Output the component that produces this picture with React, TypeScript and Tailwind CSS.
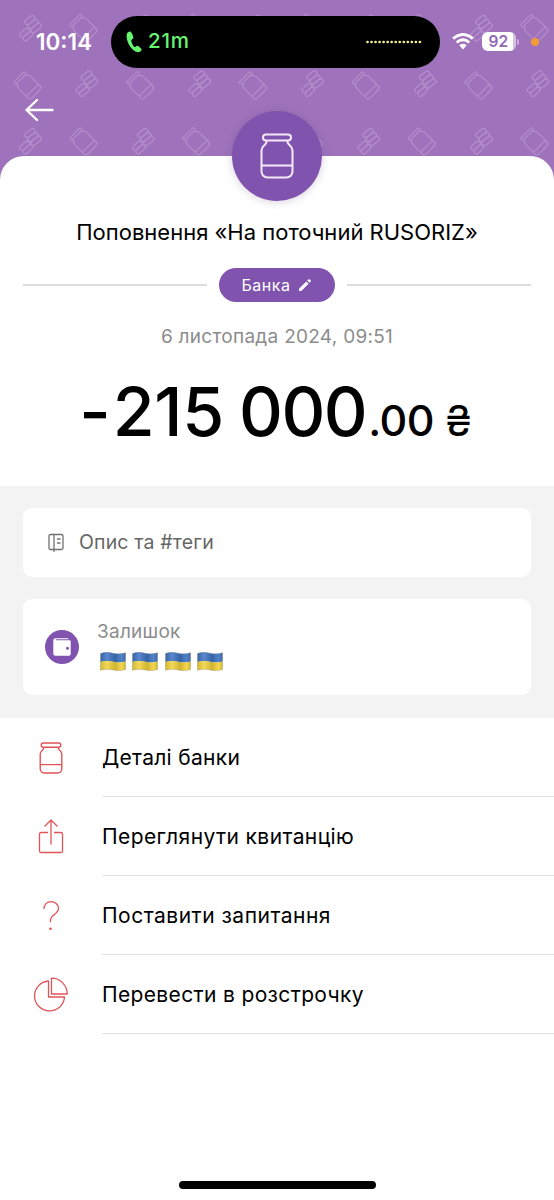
import React from "react";

const JAR = "M6 1.500h22a3 3 0 0 1 0 6H6a3 3 0 0 1 0-6ZM6.500 7.500c.9 5-5 4.500-5 10V38.500a6 6 0 0 0 6 6h19a6 6 0 0 0 6-6V17.500c0-5.500-5.900-5-5-10M1.500 32.500h31";

function Jar({ className, width }: { className: string; width: number }) {
  return (
    <svg viewBox="0 0 34 46" className={className} fill="none" stroke="currentColor" strokeWidth={width} strokeLinejoin="round">
      <path d={JAR} />
    </svg>
  );
}

const jars: [number, number][] = [];
const coins: [number, number][] = [];
for (let i = 0; i < 5; i++) {
  const x = i * 112.75;
  coins.push([30 + x, 28], [86.5 + x, 83.5], [30 + x, 141]);
  jars.push([84.5 + x, 29], [28.5 + x, 86.5], [84.5 + x, 142.5]);
}

function Pattern() {
  return (
    <svg className="absolute inset-0 h-[180px] w-full" viewBox="0 0 554 180" fill="none" stroke="#b48ecb" strokeWidth="1.200" strokeLinejoin="round">
      {jars.map(([x, y]) => (
        <g key={`j${x}-${y}`} transform={`translate(${x} ${y}) rotate(-45)`}>
          <path d="M-6.500 -13.500h13q1.500 0 1.500 1.500t-1.500 1.500h-13q-1.500 0-1.500-1.500t1.500-1.500ZM-6 -10.500c0 2-2.500 2-2.500 5V7.500q0 3 3 3h11q3 0 3-3V-5.500c0-3-2.500-3-2.500-5M-8.500 5.500h17" />
        </g>
      ))}
      {coins.map(([x, y]) => (
        <g key={`c${x}-${y}`} transform={`translate(${x} ${y})`}>
          <g transform="translate(3 -4) rotate(-38)">
            <rect x="-5.800" y="-7.500" width="11.600" height="5" rx="2.400" />
            <rect x="-5.800" y="-2.500" width="11.600" height="5" rx="2.400" />
            <rect x="-5.800" y="2.500" width="11.600" height="5" rx="2.400" />
          </g>
          <g transform="translate(-3.800 6.500) rotate(-42)">
            <rect x="-5.500" y="-4.800" width="11" height="4.800" rx="2.300" />
            <rect x="-5.500" y="0" width="11" height="4.800" rx="2.300" />
          </g>
        </g>
      ))}
    </svg>
  );
}

function Flag() {
  return (
    <svg viewBox="0 0 26 19" className="h-[19px] w-[26px]">
      <defs>
        <linearGradient id="shade" x1="0" x2="1">
          <stop offset="0" stopColor="#000" stopOpacity=".12" />
          <stop offset=".25" stopColor="#fff" stopOpacity=".15" />
          <stop offset=".6" stopColor="#000" stopOpacity=".14" />
          <stop offset=".85" stopColor="#fff" stopOpacity=".1" />
          <stop offset="1" stopColor="#000" stopOpacity=".15" />
        </linearGradient>
      </defs>
      <path d="M.500 1.500C5-.3 9 .3 13 1.200s8 1 12.500-.400V9.500C21 11 17 10.800 13 9.800S5 8.500.500 10Z" fill="#3d73c4" />
      <path d="M.500 10C5 8.500 9 8.900 13 9.800S21 11 25.500 9.500V17.500C21 19 17 18.800 13 17.900S5 17 .500 18.300Z" fill="#f0d23a" />
      <path d="M.500 1.500C5-.3 9 .3 13 1.200s8 1 12.500-.400V17.500C21 19 17 18.800 13 17.900S5 17 .500 18.300Z" fill="url(#shade)" stroke="#77764d" strokeOpacity=".45" strokeWidth=".6" />
    </svg>
  );
}

function Header() {
  return (
    <header className="relative h-[180px] bg-[#9e73bb]">
      <Pattern />
      <div className="relative flex h-[83px] items-center text-white">
        <span className="ml-[36px] w-[75px] pt-px text-[22.500px] leading-none font-semibold">10:14</span>
        <div className="flex h-[52px] w-[329px] items-center rounded-full bg-black pr-[18px] pl-[15px]">
          <svg viewBox="0 0 16 22" className="h-[22px] w-[16px]" fill="#67f56f">
            <path d="M4.500.7C3 .2.700 1.800.600 4.500c-.2 7 5 15 10.400 16.600 2.300.6 4.700-1 4.600-2.600 0-1-3.400-3.900-4.400-3.800-1.300.1-1.500 1.600-2.600 1.200C6.800 14.900 5 10.500 5.400 9c.3-1 1.800-.8 2-2C7.600 5.700 5.700 1.200 4.500.7Z" />
          </svg>
          <span className="ml-[6px] text-[20.500px] font-medium tracking-[.8px] text-[#67f56f]">21m</span>
          <svg viewBox="0 0 56 4" className="ml-auto h-[4px] w-[56px]">
            <path d="M1.500 2H55" stroke="#f7f28a" strokeWidth="2.700" strokeLinecap="round" strokeDasharray="0 4.030" />
          </svg>
        </div>
        <svg viewBox="0 0 22 17" className="ml-[12px] h-[17px] w-[22px]">
          <path d="M1.200 5.600Q11-2.700 20.800 5.600M4.700 9.500Q11 4.200 17.300 9.500" fill="none" stroke="white" strokeWidth="2.900" />
          <path d="M7.300 12.200Q11 9.400 14.700 12.200L11 16.500Z" fill="white" />
        </svg>
        <div className="ml-[8px] flex h-[19px] w-[34px] items-center justify-center rounded-[6px] bg-[linear-gradient(90deg,#fff_92%,#d5c1e1_92%)] pr-px text-[15.500px] leading-none font-semibold tracking-[.3px] text-[#9468b4]">92</div>
        <span className="ml-px h-[6px] w-[2px] rounded-r-full bg-[#c9afd9]" />
        <span className="ml-[12px] size-[8px] rounded-full bg-[#f39a38]" />
      </div>
      <button aria-label="Назад" className="absolute top-[98px] left-[24px] text-white">
        <svg viewBox="0 0 30 24" className="h-[24px] w-[30px]" fill="none" stroke="currentColor" strokeWidth="2.400" strokeLinecap="round" strokeLinejoin="round">
          <path d="M13 2 2.500 12 13 22M2.500 12h26" />
        </svg>
      </button>
    </header>
  );
}

const red = "#e05457";

const actions = [
  { label: "Деталі банки", spacing: "tracking-[.3px]", icon: <Jar width={2} className="h-[32px] w-[24px] text-[#e05457]" /> },
  {
    label: "Переглянути квитанцію",
    spacing: "tracking-[.4px]",
    icon: (
      <svg viewBox="0 0 26 36" className="h-[36px] w-[26px]" fill="none" stroke={red} strokeWidth="1.300" strokeLinejoin="round">
        <path d="M10 13.500H3q-1.500 0-1.500 1.500v17q0 1.500 1.500 1.500h20q1.500 0 1.500-1.500V15q0-1.500-1.500-1.500h-7M13 25.500V1M6.500 7.500 13 1l6.500 6.500" />
      </svg>
    ),
  },
  {
    label: "Поставити запитання",
    spacing: "tracking-[.5px]",
    icon: (
      <svg viewBox="0 0 18 30" className="h-[30px] w-[18px]" fill="none" stroke={red} strokeWidth="1.300" strokeLinecap="round">
        <path d="M2 7.500C2 3.500 5 .7 9 .7s7.500 2.500 7.500 6.500c0 6-8 6.500-8 12v1.500" />
        <circle cx="8.500" cy="27.700" r="1.300" fill={red} stroke="none" />
      </svg>
    ),
  },
  {
    label: "Перевести в розстрочку",
    spacing: "tracking-[.35px]",
    icon: (
      <svg viewBox="0 0 36 36" className="size-[36px]" fill="none" stroke={red} strokeWidth="1.300" strokeLinejoin="round">
        <path d="M15.500 4A15 15 0 1 0 31.500 20H15.500ZM18.500 1.200A15.700 15.700 0 0 1 34.200 17H18.500Z" />
      </svg>
    ),
  },
];

export default function App() {
  return (
    <div className="relative flex h-[1200px] w-[554px] flex-col overflow-hidden bg-white font-['Inter','Liberation_Sans',sans-serif] text-black">
      <Header />
      <main className="relative -mt-[24px] rounded-t-[24px] bg-white">
        <section className="relative flex h-[330px] flex-col items-center">
          <div className="absolute top-[-45px] flex size-[90px] items-center justify-center rounded-full bg-[#8054ae] shadow-[0_1px_8px_rgba(70,40,100,0.22)]">
            <Jar width={2} className="h-[46px] w-[34px] text-[#f3e9fb]" />
          </div>
          <h1 className="mt-[60px] text-[22px] leading-[32px] whitespace-nowrap">Поповнення «На поточний RUSORIZ»</h1>
          <div className="mt-[20px] flex w-full items-center gap-[12px] px-[23px]">
            <span className="h-[1.500px] flex-1 bg-[#dedede]" />
            <span className="flex h-[34px] w-[116px] items-center justify-center gap-[9px] rounded-full bg-[#8054ae] text-[16px] tracking-[.5px] text-white">
              Банка
              <svg viewBox="0 0 12 12" className="mr-px size-[12px]" fill="white">
                <path d="M0 9.700 7.300 2.400l2.300 2.300L2.300 12H0ZM8.300 1.400 9.200.5q.8-.7 1.500 0l.8.8q.7.7 0 1.500l-.9.9Z" />
              </svg>
            </span>
            <span className="h-[1.500px] flex-1 bg-[#dedede]" />
          </div>
          <time className="mt-[20px] text-[19px] leading-[30px] tracking-[.28px] whitespace-nowrap text-[#8c8c8c]">6 листопада 2024, 09:51</time>
          <div className="mt-[17px] flex items-baseline pr-[3px] leading-[84px] font-medium whitespace-nowrap">
            <span className="mr-[2px] text-[68px]">-</span>
            <span className="text-[68px] tracking-[-.3px]">215</span>
            <span className="ml-[15px] text-[68px] tracking-[-1.500px]">000</span>
            <span className="ml-[2px] text-[43px] tracking-[-.5px]">.00</span>
            <span className="ml-[11px] text-[42px] font-normal">₴</span>
          </div>
        </section>
        <section className="flex h-[232px] flex-col gap-[22px] bg-[#f3f3f3] px-[23px] pt-[22px]">
          <div className="flex h-[69px] items-center rounded-[9px] bg-white pl-[25px]">
            <svg viewBox="0 0 16 20" className="h-[20px] w-[16px]" fill="none" stroke="#717171" strokeWidth="1.300">
              <path d="M2.500 1.500h11q1.500 0 1.500 1.500v12q0 1.500-1.500 1.500h-11Q1 16.500 1 15V3q0-1.500 1.500-1.500ZM6 1.500v17.500M9 6h3.500M9 10h3.500" />
            </svg>
            <span className="ml-[15px] text-[19.500px] tracking-[.15px] text-[#666666]">Опис та #теги</span>
          </div>
          <div className="flex h-[96px] items-center rounded-[9px] bg-white pl-[22px]">
            <span className="flex size-[34px] items-center justify-center rounded-full bg-[#8054ae]">
              <svg viewBox="0 0 18 18" className="size-[18px]">
                <path d="M2.500.3h12q1 0 1 1h-12q-1 0-1 1h14q1.200 0 1.200 1.200V16q0 1.700-1.700 1.700H2.500Q.3 17.700.3 15.500v-13Q.3.3 2.500.3Z" fill="white" />
                <circle cx="14.500" cy="10.200" r="1.500" fill="#8054ae" />
              </svg>
            </span>
            <div className="-mt-[4px] ml-[18px] flex flex-col">
              <span className="text-[19px] leading-[24px] tracking-[.25px] text-[#8c8c8c]">Залишок</span>
              <span className="mt-[8px] ml-[3px] flex gap-[6.400px]">
                <Flag /><Flag /><Flag /><Flag />
              </span>
            </div>
          </div>
        </section>
        <nav>
          {actions.map((a) => (
            <button key={a.label} className="flex h-[79px] w-full items-center text-left">
              <span className="flex w-[102px] justify-center">{a.icon}</span>
              <span className={`flex h-full flex-1 items-center border-b border-[#e2e2e2] pt-[2px] text-[21px] whitespace-nowrap ${a.spacing}`}>{a.label}</span>
            </button>
          ))}
        </nav>
      </main>
      <div className="mx-auto mt-auto mb-[11px] h-[8px] w-[197px] rounded-full bg-black" />
    </div>
  );
}
